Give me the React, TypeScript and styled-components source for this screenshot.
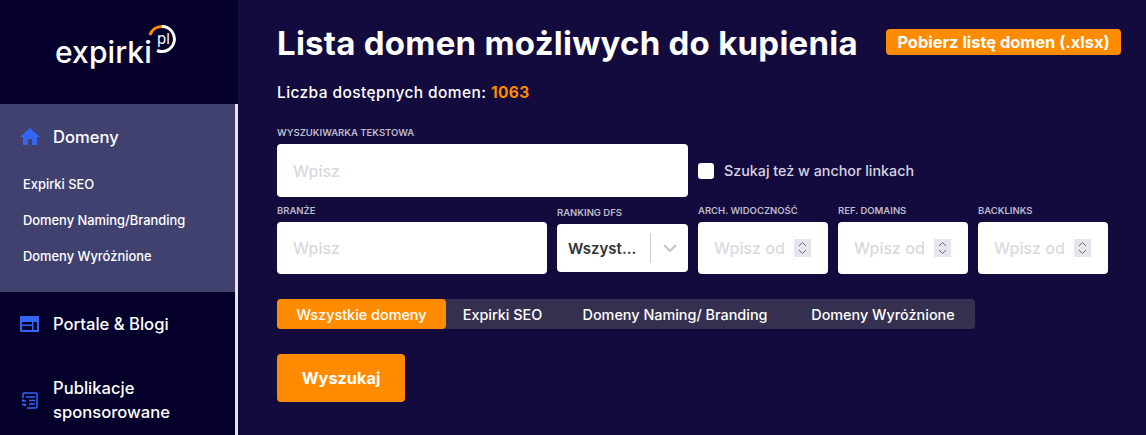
import React from 'react'
import styled, { createGlobalStyle } from 'styled-components'
import { MdHome } from 'react-icons/md'

const GlobalStyle = createGlobalStyle`
  html, body {
    margin: 0;
    padding: 0;
    width: 1146px;
    height: 435px;
    overflow: hidden;
    background: #130b3d;
    font-family: Inter, "Open Sans", sans-serif;
  }
  * { box-sizing: border-box; }
`

const Page = styled.div`
  display: flex;
  width: 1146px;
  height: 435px;
  overflow: hidden;
`

const Sidebar = styled.aside`
  position: relative;
  flex: 0 0 238px;
  background: #04002b;
  padding-right: 3px;
`

const ScrollThumb = styled.div`
  position: absolute;
  top: 104px;
  right: 0;
  bottom: 0;
  width: 3px;
  background: #e4e4ea;
`

const LogoBox = styled.div`
  height: 104px;
  padding: 24px 0 0 55px;
`

const Logo = styled.div`
  position: relative;
  width: 122px;
  height: 46px;
`

const LogoWord = styled.span`
  position: absolute;
  left: 0;
  top: 12px;
  font-size: 30px;
  font-weight: 500;
  line-height: 32px;
  letter-spacing: 0.1px;
  color: #fff;
`

const LogoRing = styled.svg`
  position: absolute;
  left: 92px;
  top: 0;
`

const LogoPl = styled.span`
  position: absolute;
  left: 102px;
  top: 6px;
  font-size: 15px;
  line-height: 18px;
  color: #fff;
`

const ActiveGroup = styled.section`
  height: 188px;
  background: #414170;
`

const NavItem = styled.div`
  display: flex;
  align-items: center;
  gap: 14px;
  padding-left: 20px;
  height: 65px;
  font-size: 16.6px;
  font-weight: 500;
  line-height: 24px;
  color: #fff;
`

const NavIcon = styled.span`
  display: flex;
  justify-content: center;
  align-items: center;
  flex: 0 0 19px;
  min-width: 0;
  height: 20px;
  color: #3366f5;

  svg {
    flex-shrink: 0;
  }
`

const SubList = styled.div`
  display: flex;
  flex-direction: column;
  gap: 16px;
  padding: 6px 0 0 23px;
`

const SubItem = styled.div`
  font-size: 12.9px;
  font-weight: 500;
  line-height: 20px;
  color: #fff;
`

const PortalItem = styled(NavItem)`
  height: 64px;
`

const PublicationItem = styled(NavItem)`
  height: 56px;
  margin-top: 16px;
`

const Main = styled.main`
  flex: 1;
  padding: 23px 25px 0 39px;
`

const Header = styled.header`
  display: flex;
  align-items: flex-start;
  justify-content: space-between;
  height: 42px;
`

const Title = styled.h1`
  margin: 0;
  font-size: 33px;
  font-weight: 700;
  line-height: 40px;
  letter-spacing: 0.25px;
  color: #fff;
  white-space: nowrap;
`

const DownloadButton = styled.button`
  margin-top: 6px;
  width: 235px;
  height: 26px;
  padding: 0;
  border: 0;
  border-radius: 4px;
  background: #ff8c00;
  color: #fff;
  font: 700 16.4px/26px Inter, sans-serif;
  white-space: nowrap;
`

const Count = styled.p`
  margin: 17px 0 0;
  font-size: 15.5px;
  font-weight: 500;
  line-height: 22px;
  letter-spacing: 0.4px;
  color: #fff;
`

const CountValue = styled.strong`
  font-weight: 700;
  color: #ff8c00;
`

const TopRow = styled.div`
  display: flex;
  align-items: flex-end;
  gap: 10px;
  margin-top: 23px;
`

const FilterRow = styled.div`
  display: flex;
  gap: 10px;
  margin-top: 8px;
`

const Field = styled.div<{ $width: number; $offset?: number }>`
  display: flex;
  flex-direction: column;
  gap: 5px;
  width: ${p => p.$width}px;
  padding-top: ${p => p.$offset ?? 0}px;
`

const Label = styled.label`
  font-size: 9.5px;
  font-weight: 600;
  line-height: 12px;
  color: #bdbacb;
  white-space: nowrap;
`

const InputBox = styled.div<{ $height: number }>`
  display: flex;
  align-items: center;
  justify-content: space-between;
  height: ${p => p.$height}px;
  padding: 0 16px;
  border-radius: 4px;
  background: #fff;
`

const Placeholder = styled.span`
  font-size: 16px;
  font-weight: 500;
  color: #d9d9de;
  white-space: nowrap;
`

const NumberBox = styled(InputBox)`
  padding: 0 17px 0 16px;
`

const Spinner = styled.span`
  display: flex;
  align-items: center;
  justify-content: center;
  width: 17px;
  height: 18px;
  background: #e7e6ee;
`

const CheckRow = styled.div`
  display: flex;
  align-items: center;
  gap: 10px;
  height: 53px;
  font-size: 14.3px;
  font-weight: 500;
  color: #d6d4e0;
  white-space: nowrap;
`

const CheckBox = styled.span`
  width: 16px;
  height: 16px;
  border-radius: 3px;
  background: #fff;
`

const SelectBox = styled.div`
  display: flex;
  align-items: center;
  height: 48px;
  padding-left: 11px;
  border-radius: 4px;
  background: #fff;
`

const SelectValue = styled.span`
  flex: 1;
  font-size: 15px;
  font-weight: 600;
  color: #333;
`

const SelectDivider = styled.span`
  width: 1px;
  height: 30px;
  background: #ccc;
`

const SelectArrow = styled.span`
  display: flex;
  justify-content: center;
  width: 37px;
`

const Tabs = styled.div`
  display: flex;
  width: 698px;
  height: 30px;
  margin-top: 25px;
  border-radius: 4px;
  background: #35304f;
`

const Tab = styled.div<{ $active?: boolean; $width: number }>`
  display: flex;
  align-items: center;
  justify-content: center;
  width: ${p => p.$width}px;
  border-radius: 4px;
  background: ${p => (p.$active ? '#ff8c00' : 'transparent')};
  color: #fff;
  font-size: 14.4px;
  font-weight: 500;
  white-space: nowrap;
`

const SearchButton = styled.button`
  display: block;
  width: 128px;
  height: 48px;
  margin-top: 25px;
  padding: 0;
  border: 0;
  border-radius: 4px;
  background: #ff8c00;
  color: #fff;
  font: 700 16.3px/48px Inter, sans-serif;
`

const PortalIcon = () => (
  <svg width="19" height="16" viewBox="0 0 19 16">
    <path fill="currentColor" fillRule="evenodd" d="M1 0h17a1 1 0 0 1 1 1v14a1 1 0 0 1-1 1H1a1 1 0 0 1-1-1V1a1 1 0 0 1 1-1zm1 6v2.5h10V6H2zm0 4v4h10v-4H2zm11.500-4v8H17V6h-3.500z" />
  </svg>
)

const PublicationIcon = () => (
  <svg width="17" height="17" viewBox="0 0 17 17" fill="none" stroke="currentColor" strokeWidth="1.500">
    <path d="M2 6V2.200C2 1.500 2.500 1 3.200 1h11.600c.7 0 1.200.5 1.200 1.200v12.600c0 .7-.5 1.200-1.200 1.200H6" />
    <path d="M5 5h9M8 8.500h6M8 12h6M1 9h4M1 9l1.500-1.500M5 12.500H1M5 12.500 3.500 14" />
  </svg>
)

const SpinnerIcon = () => (
  <svg width="9" height="14" viewBox="0 0 9 14" fill="none" stroke="#6d6d75" strokeWidth="1">
    <path d="M1 5l3.500-3.500L8 5M1 9l3.500 3.500L8 9" />
  </svg>
)

const NumberField = ({ label }: { label: string }) => (
  <Field $width={130}>
    <Label>{label}</Label>
    <NumberBox $height={52}>
      <Placeholder>Wpisz od</Placeholder>
      <Spinner><SpinnerIcon /></Spinner>
    </NumberBox>
  </Field>
)

const App = () => (
  <Page>
    <GlobalStyle />
    <Sidebar>
      <LogoBox>
        <Logo>
          <LogoWord>expirki</LogoWord>
          <LogoRing width="30" height="30" viewBox="0 0 30 30" fill="none" strokeWidth="3">
            <path d="M3 11A12.500 12.500 0 0 1 15 2.500" stroke="#ff8c00" />
            <path d="M15 2.500A12.500 12.500 0 1 1 10 26.500" stroke="#fff" />
          </LogoRing>
          <LogoPl>pl</LogoPl>
        </Logo>
      </LogoBox>
      <ActiveGroup>
        <NavItem>
          <NavIcon><MdHome size={24} /></NavIcon>
          Domeny
        </NavItem>
        <SubList>
          <SubItem>Expirki SEO</SubItem>
          <SubItem>Domeny Naming/Branding</SubItem>
          <SubItem>Domeny Wyróżnione</SubItem>
        </SubList>
      </ActiveGroup>
      <PortalItem>
        <NavIcon><PortalIcon /></NavIcon>
        Portale &amp; Blogi
      </PortalItem>
      <PublicationItem>
        <NavIcon><PublicationIcon /></NavIcon>
        <span>Publikacje<br />sponsorowane</span>
      </PublicationItem>
      <ScrollThumb />
    </Sidebar>
    <Main>
      <Header>
        <Title>Lista domen możliwych do kupienia</Title>
        <DownloadButton>Pobierz listę domen (.xlsx)</DownloadButton>
      </Header>
      <Count>Liczba dostępnych domen: <CountValue>1063</CountValue></Count>
      <TopRow>
        <Field $width={411}>
          <Label>WYSZUKIWARKA TEKSTOWA</Label>
          <InputBox $height={53}><Placeholder>Wpisz</Placeholder></InputBox>
        </Field>
        <CheckRow><CheckBox />Szukaj też w anchor linkach</CheckRow>
      </TopRow>
      <FilterRow>
        <Field $width={270}>
          <Label>BRANŻE</Label>
          <InputBox $height={52}><Placeholder>Wpisz</Placeholder></InputBox>
        </Field>
        <Field $width={131} $offset={2}>
          <Label>RANKING DFS</Label>
          <SelectBox>
            <SelectValue>Wszyst...</SelectValue>
            <SelectDivider />
            <SelectArrow>
              <svg width="14" height="8" viewBox="0 0 14 8" fill="none" stroke="#c4c4c8" strokeWidth="2">
                <path d="M1 1l6 6 6-6" />
              </svg>
            </SelectArrow>
          </SelectBox>
        </Field>
        <NumberField label="ARCH. WIDOCZNOŚĆ" />
        <NumberField label="REF. DOMAINS" />
        <NumberField label="BACKLINKS" />
      </FilterRow>
      <Tabs>
        <Tab $active $width={169}>Wszystkie domeny</Tab>
        <Tab $width={113}>Expirki SEO</Tab>
        <Tab $width={232}>Domeny Naming/ Branding</Tab>
        <Tab $width={184}>Domeny Wyróżnione</Tab>
      </Tabs>
      <SearchButton>Wyszukaj</SearchButton>
    </Main>
  </Page>
)

export default App
